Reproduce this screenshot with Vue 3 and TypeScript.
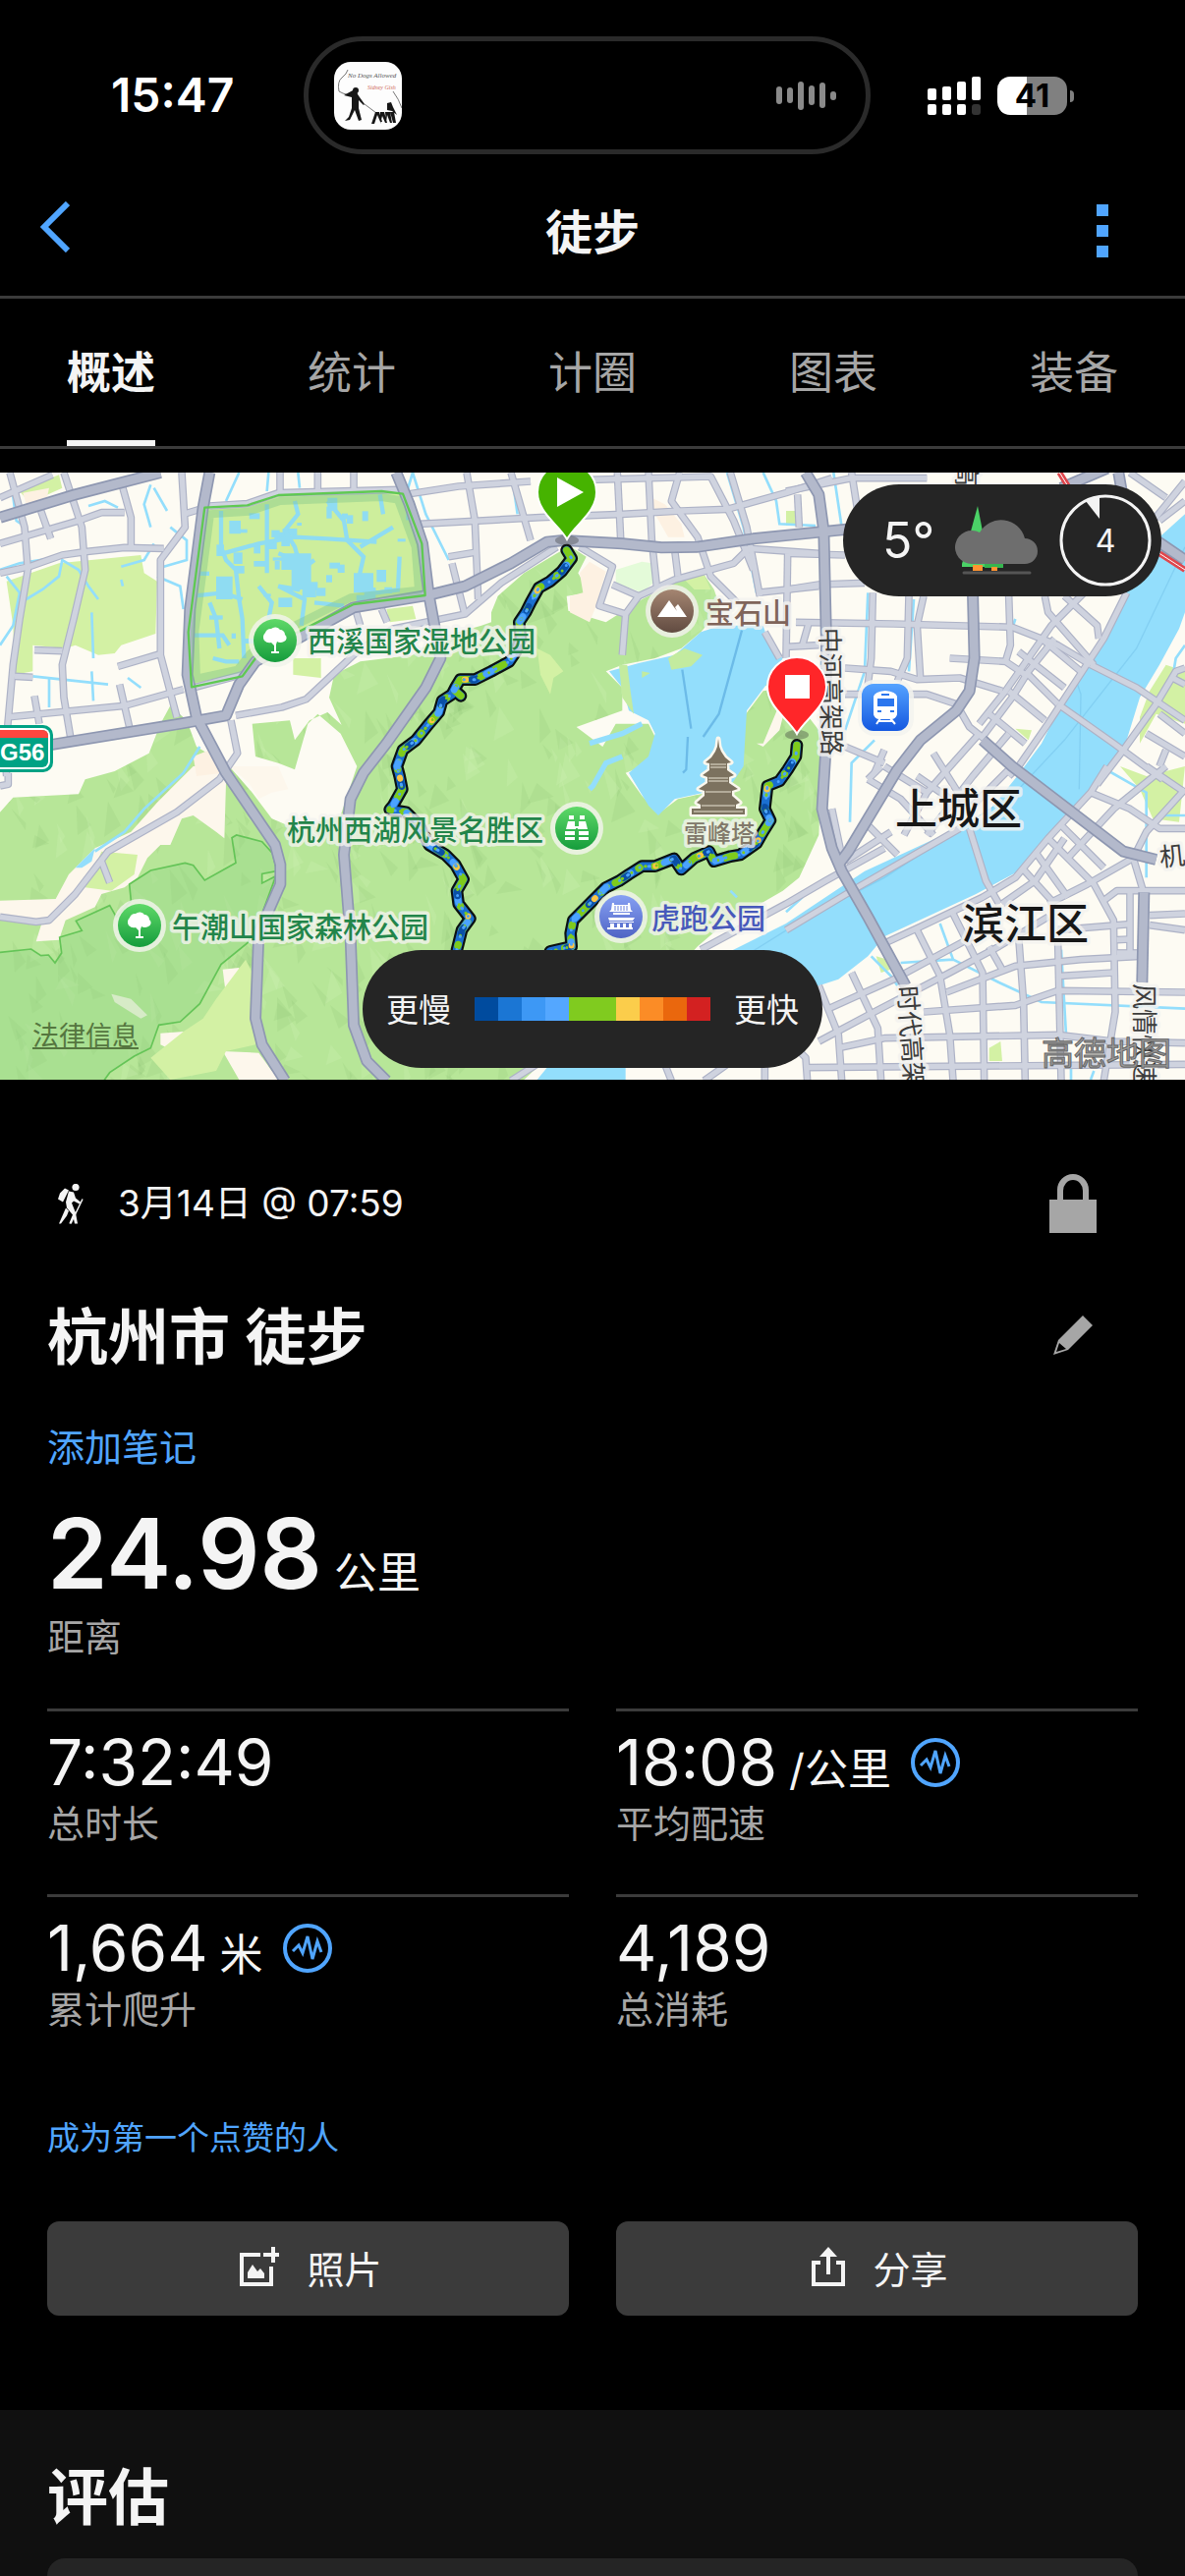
<script setup lang="ts">
import { ref } from 'vue'

const tabs = ['概述', '统计', '计圈', '图表', '装备']
const activeTab = ref('概述')

interface Stat {
  value: string
  unit?: string
  label: string
  chart?: boolean
}
const stats: Stat[] = [
  { value: '7:32:49', label: '总时长' },
  { value: '18:08', unit: '/公里', label: '平均配速', chart: true },
  { value: '1,664', unit: '米', label: '累计爬升', chart: true },
  { value: '4,189', label: '总消耗' },
]

const paceColors = ['#004b9e', '#1b76d4', '#3d98f5', '#54a7ff', '#80cb1f', '#80cb1f', '#fbcd4b', '#fb8c26', '#ea670d', '#d32121']
const wave = [18, 16, 29, 20, 26, 9]

const hills = [
  'M0 1070 40 1025 240 1015 260 970 350 945 455 890 490 800 520 745 570 790 600 870 700 930 770 1010 830 1090 900 1120 1040 1080 1090 930 1040 830 970 770 940 800 900 940 850 920 780 900 770 800 885 790 900 850 945 790 1000 765 1050 810 1055 830 1005 720 1020 650 1100 610 1260 590 1330 540 1470 500 1500 490 1500 460 1520 410 1600 340 1700 280 1740 258 1790 290 1765 340 1800 400 1730 410 1735 455 1850 490 1960 420 2100 350 2150 345 2180 390 2200 450 2140 520 2080 570 2000 600 1900 620 1850 640 1900 690 1900 760 1760 810 1840 870 1800 940 1880 800 1980 800 2010 860 1960 930 1910 950 1960 1020 2010 1075 2070 1030 2160 1010 2230 960 2240 930 2270 780 2330 700 2400 690 2500 820 2505 1000 2500 1140 2440 1270 2390 1310 2200 1420 2130 1480 2000 1620 1660 1830 1600 1887 0 1887Z',
  'M2280 640 2330 560 2380 640 2360 700Z',
]
const hillCreams = [
  'M590 930 660 930 690 980 685 1150 660 1130 590 1080 555 1090 520 1170 490 1170 450 1210 420 1270 380 1300 310 1320 290 1360 200 1400 180 1460 110 1465 130 1400 0 1400 0 1340 170 1335 210 1260 290 1180 400 1130 480 1040Z',
  'M700 930 850 930 880 1000 830 1010 790 1030 760 980Z',
  'M680 1550 730 1545 725 1600 745 1650 690 1630Z',
  'M340 1625 400 1640 450 1690 430 1700 350 1650Z',
  'M490 1745 560 1740 570 1770 530 1800 490 1780Z',
  'M680 1800 790 1805 830 1860 880 1887 730 1887Z',
  'M2330 860 2380 740 2410 700 2380 820 2330 870 2310 860Z',
]
const limes = [
  'M20 365 180 310 430 285 440 340 480 365 475 525 370 560 350 585 300 590 230 560 200 570 100 560 100 640 45 650 40 500Z',
  'M60 90 180 40 190 80 90 125Z',
  'M895 600 980 600 980 660 895 650Z',
  'M1180 450 1260 440 1270 480 1190 490Z',
  'M310 1190 420 1200 410 1260 340 1310 260 1300Z',
  'M620 1700 660 1640 750 1520 780 1580 780 1780 690 1800 660 1860 520 1887 460 1820 560 1740Z',
  'M1640 570 1680 590 1720 640 1690 660 1680 710 1650 650Z',
  'M2090 360 2150 345 2170 390 2120 390Z',
  'M2040 600 2090 570 2140 590 2110 620 2050 635Z',
  'M2400 150 2430 150 2435 195 2400 195Z',
  'M3560 620 3618 640 3618 800 3530 770 3480 860 3480 780 3510 700Z',
  'M3100 815 3150 820 3140 850Z',
  'M3420 930 3500 960 3618 930 3600 1100 3520 1090 3480 1000Z',
  'M2675 1510 2710 1520 2720 1550 2690 1560Z',
  'M3020 1790 3055 1770 3060 1830 3020 1830Z',
]
const peaches = [
  'M1740 410 1780 400 1770 340 1800 305 1850 335 1820 440 1800 490 1740 460Z',
  'M1990 110 2030 130 2080 190 2090 230 2040 230 2000 160Z',
  'M70 95 150 80 140 125 80 130Z',
  'M590 900 640 880 680 950 600 960Z',
]
const waters = [
  'M3618 160 3540 230 3420 420 3380 520 3330 600 3250 720 3180 860 3110 955 3000 1090 2900 1130 2640 1250 2400 1410 2200 1510 2000 1600 1670 1850 1640 1887 1910 1887 1910 1840 2300 1760 2500 1600 2560 1580 2650 1510 2700 1450 2980 1320 3110 1250 3200 1140 3250 1080 3360 980 3440 850 3480 720 3540 620 3600 510 3618 460Z',
  'M2140 520 2200 500 2330 500 2350 560 2390 600 2340 680 2280 760 2270 930 2230 990 2150 1010 2060 1030 2010 1080 1980 1050 1920 950 1980 900 2000 830 1980 790 1920 760 1900 690 1860 640 1950 615 2060 590Z',
  'M230 1240 290 1180 280 1220 250 1240Z',
]
const islets = ['M2040 600 2090 570 2145 590 2110 625 2050 635Z', 'M1890 620 1915 620 1925 700 1935 770 1900 720Z', 'M1960 640 1985 645 1960 660Z']
const streams = [
  'M30 33 50 180 80 200M0 330 60 310 190 290M20 350 60 400 40 500 0 560M80 420 130 390 180 350 190 300 240 330 270 380 300 420',
  'M280 460 285 600M370 360 375 380M270 135 320 120 360 140M460 70 440 130 460 200M470 80 510 150M520 200 570 240 570 300 500 320',
  'M470 250 440 300 370 320M480 350 550 380 560 450M100 655 330 680M150 660 150 750M280 640 285 730M390 660 430 690',
  'M820 33 815 90M910 33 915 80M730 33 690 120M1260 33 1300 160 1370 300M1570 90 1580 160M2220 33 2270 200 2310 400',
  'M2330 33 2370 120 2380 190 2490 195M2650 400 2640 640 2580 820M2790 420 2775 640M2545 33 2570 200M3100 480 3090 510',
  'M2670 850 2600 920 2595 1100M2560 600 2500 640M610 870 560 950 440 1060 380 1130 290 1190M3618 560 3590 600 3580 660',
  'M3360 930 3500 1010 3500 1270M3540 1080 3618 1080M2870 1410 2910 1520 3050 1590 3180 1650 3618 1670M2750 1530 2910 1520',
  'M2660 1510 2720 1570 2740 1600M3240 1490 3255 1750M3270 1850 3270 1887M3340 1860 3330 1887M2400 1375 2450 1330M2230 1310 2250 1330',
]
const marsh = [
  'M675 150 675 260 690 300 720 330 730 420 740 480 745 600M680 280 790 250 900 230 1000 235 1150 245M815 130 815 340',
  'M590 410 680 400 740 420M640 430 660 480 670 570M590 530 680 530 700 560M650 600 690 610 730 610M790 380 830 430 820 480',
  'M900 120 910 160 870 210 900 260 920 330 960 300M850 280 900 300 940 340 910 390 850 380 930 420 920 500',
  'M1000 120 1050 180 1060 240 1110 290 1090 380 1150 400 1220 390M1160 100 1170 160M1100 260 1200 200M1220 290 1215 390M960 430 1050 440',
]
const lakeLines = ['M2083 635 2110 815', 'M2265 515 2195 770 2147 840', 'M2100 840 2095 940 2085 950']

const majors = [
  'M0 170 230 100 490 33', 'M640 33 620 140 580 450 572 650 600 780 690 950 840 1170 856 1230 856 1290 790 1440 780 1700 800 1780 870 1890',
  'M150 865 550 800 690 775 730 680 780 610 900 545 1080 445 1310 407 1420 380 1560 310 1670 245 1720 240 1900 250 2020 262 2130 260 2300 235 2600 205',
  'M1210 33 1250 130 1290 250 1310 410 1345 600 1300 690 1180 860 1110 950 1070 1030 1050 1200 1070 1450 1080 1720 1120 1830 1180 1890',
  'M2460 33 2500 100 2515 210 2523 550 2520 900 2510 1060 2540 1180 2570 1250 2650 1390 2765 1600',
  'M2970 400 2975 600 2960 700 2920 760 2810 850 2740 940 2590 1190 2560 1230',
  'M3000 850 3090 930 3430 1190 3530 1215', 'M3493 1315 3487 1590', 'M3240 80 3380 20', 'M3415 33 3425 90', 'M3530 240 3618 300',
]
const minors = [
  'M0 250 240 180 310 155 380 155', 'M0 340 90 320 190 285 260 275 380 262 500 265', 'M30 33 75 200 85 330 60 480 40 620 15 900 20 960', 'M0 110 160 40',
  'M195 33 250 200 260 330 225 480 190 620 195 720 215 840', 'M375 80 400 170 400 255', 'M125 150 155 235', 'M555 33 565 200 490 300 490 590 540 780',
  'M560 160 610 145', 'M105 575 190 578', 'M360 625 495 585', 'M45 655 100 658', 'M20 780 380 745 560 695', 'M105 715 120 800', 'M365 680 395 810',
  'M640 135 755 128 850 95 1220 85', 'M855 33 855 90', 'M970 33 970 85', 'M1080 33 1080 85', 'M590 690 740 650', 'M0 990 25 985 25 950',
  'M720 775 860 750 935 725 1090 580 1200 510 1420 465 1530 370 1700 260', 'M705 790 725 890 670 970 540 1070 330 1190 230 1320 150 1400 110 1405 0 1390',
  'M310 1220 335 1285', 'M1085 450 1100 500', 'M1165 450 1182 490', 'M1250 98 1400 75 1620 60', 'M1280 190 1650 170 1900 160 2080 150 2220 145 2400 95 2540 50',
  'M1425 33 1450 180 1460 420', 'M1560 33 1620 240', 'M1370 290 1460 275', 'M1380 310 1420 470', 'M1800 55 2170 45 2240 180 2300 330',
  'M1885 33 1895 235', 'M1980 33 1990 240 2005 380', 'M2075 33 2050 120 2130 230 2170 350 2250 430', 'M1770 260 1870 320 1830 440 1910 465 1950 410 1870 375',
  'M1910 465 1900 590', 'M1950 410 2060 360 2240 310 2290 260', 'M2060 270 2070 350', 'M2230 33 2280 200 2320 410', 'M2290 265 2500 280', 'M2310 400 2500 380',
  'M2430 490 2730 495', 'M2335 520 2380 600', 'M2400 90 2600 50 2830 50', 'M2435 100 2440 200', 'M2600 33 2620 160', 'M2410 280 2580 285', 'M2405 390 2500 375 2640 370',
  'M2400 565 2500 560', 'M2405 280 2400 600', 'M2470 490 2450 560', 'M2665 400 2660 600 2650 680', 'M2775 410 2770 600 2740 670', 'M2820 410 2800 500 2810 660',
  'M2730 495 3090 505 3230 560 3330 620', 'M2580 630 2720 640 2800 665 2930 660 3060 700', 'M2900 600 3070 610 3130 650', 'M3080 410 3085 560 3070 610',
  'M3190 410 3200 460 3340 620', 'M3250 410 3350 500 3355 540', 'M3310 400 3210 500 3070 700 2990 800', 'M3440 400 3370 540 3200 800 3110 930 3080 960',
  'M3110 580 3250 690', 'M3180 540 3300 640', 'M2580 710 2830 710 2920 740 2960 810 3010 850', 'M3000 840 3090 720 3140 640 3220 540', 'M3020 770 3130 860',
  'M3080 700 3190 790', 'M3130 640 3230 740', 'M3330 620 3470 690 3618 790', 'M3230 740 3400 860 3550 970', 'M3618 630 3590 640 3530 740 3430 880 3350 985',
  'M3500 830 3618 900', 'M3540 770 3618 830', 'M3580 660 3618 680', 'M3560 880 3540 930', 'M2580 870 2700 920', 'M2700 880 2670 950', 'M3618 60 3480 230', 'M3450 33 3560 110', 'M3618 120 3540 180',
  'M2650 970 2750 1030 2850 1140', 'M2690 930 2650 970', 'M2700 930 2830 1010', 'M2990 830 2830 1010 2760 1140', 'M2850 890 2950 1050', 'M2800 960 2930 1050',
  'M3080 830 2970 960 2830 1140', 'M3090 930 2970 1050', 'M2650 1110 2740 1200', 'M2580 1220 2720 1130', 'M2540 1060 2565 1180 2570 1220',
  'M2140 1490 2400 1350 2520 1280 2700 1180', 'M2400 1430 2600 1310 2930 1120', 'M2960 1120 3010 1280 3050 1350',
  'M2680 1480 2810 1420 3000 1330 3100 1270 3200 1150 3330 1010 3380 930', 'M2530 1670 2730 1580 2970 1450', 'M2500 1770 2650 1690 2900 1560 3050 1480 3200 1390',
  'M3200 1150 3340 1290 3400 1400 3405 1680 3370 1890', 'M3160 1190 3260 1330', 'M3120 1240 3220 1350', 'M3250 1150 3160 1280 3060 1350', 'M3240 1110 3370 1240',
  'M3330 1010 3450 1060 3540 1120 3618 1120', 'M3618 1000 3500 1130 3460 1210 3320 1290 3200 1350', 'M3500 930 3618 1010', 'M3560 930 3400 1060 3260 1210',
  'M3460 1210 3490 1310', 'M3370 1340 3410 1310 3618 1310', 'M3230 1430 3450 1412', 'M3450 1310 3450 1500', 'M3410 1460 3450 1458', 'M3410 1500 3480 1500', 'M3510 1385 3618 1380', 'M3510 1415 3618 1430',
  'M2890 1620 3100 1540 3300 1520 3480 1510', 'M3240 1570 3400 1560', 'M2820 1680 3100 1660 3230 1615 3618 1620', 'M2560 1790 2700 1760 3230 1750 3400 1770 3618 1775',
  'M2460 1850 3618 1840', 'M2500 1600 2560 1750 2570 1890', 'M2600 1560 2680 1730 2690 1890', 'M2800 1430 2870 1570 2900 1750 2910 1890', 'M2910 1380 3000 1560 3005 1890',
  'M3110 1450 3125 1650 3130 1890', 'M3230 1470 3240 1890', 'M3020 1480 3065 1560', 'M2465 1890 2460 1820 2400 1760', 'M1560 1890 1670 1820', 'M2030 1840 2050 1890', 'M2335 1840 2335 1890', 'M2220 1840 2150 1890',
]
const routes = [
  'M1730 270 1745 295 1715 335 1680 365 1645 385 1620 430 1605 460 1585 490 1590 540 1575 580 1555 610 1500 640 1450 665 1405 665 1390 690 1380 710 1350 730 1340 765 1310 800 1270 850 1230 880 1212 930 1220 960 1228 1000 1200 1050 1190 1062 1240 1070 1280 1110 1310 1170 1360 1200 1390 1230 1415 1275 1395 1310 1400 1350 1435 1395 1410 1430 1395 1490',
  'M2433 865 2430 900 2405 940 2380 975 2343 990 2335 1060 2352 1095 2330 1130 2310 1165 2260 1200 2230 1205 2180 1220 2165 1190 2120 1210 2080 1245 2058 1212 2000 1235 1960 1235 1920 1260 1890 1280 1850 1300 1800 1350 1750 1400 1742 1440 1745 1480 1680 1495',
  'M1390 700 1407 715',
]
const routeTones = [
  { color: '#7ecb1c', dash: '46 52 0 60 30 46 4 38', shift: 0, width: 22 },
  { color: '#4ba3ff', dash: '10 74 18 110', shift: 30, width: 20 },
  { color: '#0a4fa6', dash: '14 116 20 150', shift: 70, width: 20 },
  { color: '#fbc545', dash: '0 216 4 170', shift: 44, width: 18 },
  { color: '#7ecb1c', dash: '0 33 2 47', shift: 5, width: 9 },
  { color: '#4ba3ff', dash: '0 41 3 29', shift: 17, width: 9 },
]

// Small deterministic generator for the relief facets and marsh ponds.
let seed = 11
const rand = () => {
  seed = (seed * 16807) % 2147483647
  return seed / 2147483647
}
const facets = Array.from({ length: 620 }, () => {
  const x = rand() * 2500
  const y = 300 + rand() * 1600
  const a = 20 + rand() * 40
  const b = 24 + rand() * 50
  return {
    d: `M${Math.round(x)} ${Math.round(y)}l${Math.round(a)} ${Math.round(b)} ${Math.round(-a * rand() * 1.6)} ${Math.round(b * 0.5)}Z`,
    dark: rand() > 0.35,
  }
})
const ponds = Array.from({ length: 60 }, () => ({
  x: Math.round(590 + rand() * 660),
  y: Math.round(130 + rand() * 480),
  w: Math.round(10 + rand() * 34),
  h: Math.round(8 + rand() * 30),
}))

interface MapLabel { text: string; x: number; y: number; tone: string; turn?: number }
const labels: MapLabel[] = [
  { text: '西溪国家湿地公园', x: 313, y: 183, tone: 'park' },
  { text: '杭州西湖风景名胜区', x: 292, y: 375, tone: 'park' },
  { text: '午潮山国家森林公园', x: 175, y: 474, tone: 'park' },
  { text: '宝石山', x: 718, y: 154, tone: 'peak' },
  { text: '虎跑公园', x: 663, y: 465, tone: 'temple' },
  { text: '雷峰塔', x: 696, y: 376, tone: 'tower' },
  { text: '上城区', x: 911, y: 358, tone: 'district' },
  { text: '滨江区', x: 979, y: 475, tone: 'district' },
  { text: '中河高架路', x: 835, y: 158, tone: 'road', turn: 89 },
  { text: '时代高架', x: 914, y: 523, tone: 'road', turn: 86 },
  { text: '风情快速', x: 1155, y: 520, tone: 'road', turn: 90 },
  { text: '高', x: 974, y: -12, tone: 'road', turn: 90 },
  { text: '机', x: 1181, y: 401, tone: 'road', turn: -6 },
]
</script>

<template>
  <div class="page">
    <header>
      <div class="status">
        <span class="clock">15:47</span>
        <div class="island">
          <svg class="art" viewBox="0 0 69 69" aria-hidden="true">
            <rect width="69" height="69" rx="17" fill="#fdfdfd" />
            <path d="M5 30Q3 20 8 16T14 8M5 30 9 32 16 34M31 43 43 52M60 30Q66 38 69 47" fill="none" stroke="#777" stroke-width="1" />
            <text x="14" y="16" class="art-name">No Dogs Allowed</text>
            <text x="34" y="28" class="art-by">Sidney Gish</text>
            <path d="M19 29h4l1 4 2 3 5 7-1 1-5-5 0 8 3 12-3 1-4-11-5 10-5 1 4-4 3-9 0-11-8-2z" fill="#161616" />
            <circle cx="22" cy="29" r="3" fill="#161616" />
            <path d="M54 42l4-1 2 5 4 8-5-4-5-1zM42 51h4l3 10h-2l-3-7-3 9h-3zM47 51h4l3 11h-2l-3-7-2 8zM52 51h5l2 11h-2l-3-8-1 8zM57 51h4l2 11h-3z" fill="#161616" />
          </svg>
          <span class="wave" aria-hidden="true"><i v-for="(h, i) in wave" :key="i" :style="{ height: h + 'px' }" /></span>
        </div>
        <svg class="signal" viewBox="0 0 54 39" aria-hidden="true">
          <g fill="#fff">
            <rect y="12" width="9" height="12" rx="2" /><rect x="15" y="10" width="9" height="14" rx="2" /><rect x="30" y="5" width="9" height="19" rx="2" /><rect x="45" width="9" height="24" rx="2" />
            <rect y="28" width="9" height="11" rx="2" /><rect x="15" y="28" width="9" height="11" rx="2" /><rect x="30" y="28" width="9" height="11" rx="2" />
          </g>
          <rect x="45" y="28" width="9" height="11" rx="3" fill="#333" />
        </svg>
        <div class="battery">41</div>
      </div>
      <nav class="bar">
        <button class="back" aria-label="返回">
          <svg width="30" height="52" viewBox="0 0 30 52"><path d="M28 2 4 26 28 50" fill="none" stroke="#50a5ff" stroke-width="6" /></svg>
        </button>
        <h1>徒步</h1>
        <button class="more" aria-label="更多"><i /><i /><i /></button>
      </nav>
      <div class="tabs" role="tablist">
        <button v-for="t in tabs" :key="t" role="tab" :aria-selected="t === activeTab" :class="{ on: t === activeTab }" @click="activeTab = t">{{ t }}</button>
      </div>
    </header>

    <section class="map">
      <svg class="canvas" viewBox="0 0 1206 618" preserveAspectRatio="xMidYMid slice">
        <defs>
          <clipPath id="hillClip"><path v-for="d in hills" :key="d" :d="d" /></clipPath>
          <clipPath id="marshClip"><path d="M625 140 755 133 850 102 1165 90 1230 98 1288 250 1298 408 1080 435 900 525 780 600 740 655 585 688 575 520 600 330Z" /></clipPath>
          <linearGradient id="gPark" x2="0" y2="1"><stop stop-color="#5fd968" /><stop offset="1" stop-color="#159c3c" /></linearGradient>
          <linearGradient id="gPeak" x2="0" y2="1"><stop stop-color="#a48571" /><stop offset="1" stop-color="#614b41" /></linearGradient>
          <linearGradient id="gTemple" x2="0" y2="1"><stop stop-color="#86a0f3" /><stop offset="1" stop-color="#4f64c4" /></linearGradient>
          <linearGradient id="gTrain" x2="0" y2="1"><stop stop-color="#55a3ff" /><stop offset="1" stop-color="#1458e0" /></linearGradient>
          <g id="tree"><path d="M-11 0a6 6 0 0 1 1-8 6 6 0 0 1 6-4 6 6 0 0 1 9 1 5 5 0 0 1 5 5 4 4 0 0 1-1 7q-4 2-7 0L1 4v7h3v2h-8v-2h3V5l-3-3q-4 1-7-2Z" fill="#fff" /></g>
        </defs>
        <rect width="1206" height="618" fill="#fdfbf3" />
        <g transform="scale(.33333) translate(0 -33)">
          <path v-for="d in limes.slice(0, 4)" :key="d" :d="d" fill="#d3f1a4" />
          <path v-for="d in hills" :key="d" :d="d" fill="#b7e698" />
          <g clip-path="url(#hillClip)">
            <path v-for="(f, i) in facets" :key="i" :d="f.d" :fill="f.dark ? '#6fa85a' : '#d8f5bd'" :opacity="f.dark ? 0.1 : 0.2" />
          </g>
          <path v-for="d in hillCreams" :key="d" :d="d" fill="#fdf7ec" />
          <path v-for="d in limes.slice(4)" :key="d" :d="d" fill="#d3f1a4" />
          <path v-for="d in peaches" :key="d" :d="d" fill="#fdf1e2" />
          <path d="M1880 330 1960 305 1990 310 1995 370 1960 400 1880 370Z" fill="#e4fbd9" />
          <g fill="#8fd384" fill-opacity=".35" stroke="#64c457" stroke-width="5">
            <path d="M400 1340 395 1290 460 1248 565 1225 590 1232 625 1278 720 1225 708 1148 722 1140 800 1160 832 1195 845 1250 800 1258 800 1287 842 1265 800 1380 755 1470 675 1535 610 1655 550 1710 485 1720 460 1790 410 1815 335 1865 310 1900-20 1900-20 1500 95 1488 125 1508 148 1506 168 1530 188 1500 182 1452 250 1432 232 1402 335 1355 355 1390Z" />
          </g>
          <path v-for="d in waters" :key="d" :d="d" fill="#93defc" />
          <path v-for="d in islets" :key="d" :d="d" fill="#c3eb9f" />
          <path d="M3618 260 3470 570 3250 850 3100 1010 2700 1270 2450 1400 2000 1680M3290 680 3300 710 3295 1000" fill="none" stroke="#7cc9ee" stroke-width="4" opacity=".7" />
          <path v-for="d in lakeLines" :key="d" :d="d" fill="none" stroke="#6cbbe8" stroke-width="7" />
          <path v-for="d in streams" :key="d" :d="d" fill="none" stroke="#93defc" stroke-width="8" />
          <path d="M1260 33 1240 100 1300 400" fill="none" stroke="#93defc" stroke-width="8" />
          <path d="M1900 900 1850 920 1810 990 1800 1000M1800 860 1900 830 1960 800M2540 1200 2560 1180" fill="none" stroke="#93defc" stroke-width="16" />
          <g clip-path="url(#marshClip)">
            <rect x="560" y="80" width="760" height="620" fill="#cdee9c" />
            <rect v-for="(p, i) in ponds" :key="i" :x="p.x" :y="p.y" :width="p.w" :height="p.h" fill="#8fdcf2" />
            <path v-for="d in marsh" :key="d" :d="d" fill="none" stroke="#8fdcf2" stroke-width="13" />
            <path d="M700 180h35v40h-35zM860 280h90v110h-60v-60h-30zM1080 340h60v60h-60zM1000 110h30v40h-30zM660 350h50v70h-50z" fill="#8fdcf2" />
          </g>
          <g fill="none" stroke-linejoin="round">
            <path v-for="d in minors" :key="d" :d="d" stroke="#adb2c6" stroke-width="23" />
            <path v-for="d in minors" :key="d" :d="d" stroke="#cfd3df" stroke-width="16" />
            <path v-for="d in majors" :key="d" :d="d" stroke="#8e97b1" stroke-width="36" />
            <path v-for="d in majors" :key="d" :d="d" stroke="#b3b9cb" stroke-width="26" />
            <path d="M3235 33 3270 90M3540 280 3618 330" stroke="#e0474d" stroke-width="18" />
            <path d="M3235 33 3270 90M3540 280 3618 330" stroke="#fff" stroke-width="3" />
            <path d="M625 140 755 133 850 102 1165 90 1230 98 1288 250 1298 408 1080 435 900 525 780 600 740 655 585 688 575 520 600 330Z" stroke="#5fc952" stroke-width="7" />
            <path d="M642 160 760 152 855 120 1165 108 1215 116 1268 260 1278 392 1070 415 890 505 765 585 725 635 600 662 595 520 620 330Z" stroke="#7cc38a" stroke-width="24" opacity=".4" />
          </g>
          <g fill="none" stroke-linejoin="round" stroke-linecap="round">
            <path v-for="d in routes" :key="d" :d="d" stroke="#0b1010" stroke-width="38" />
            <path v-for="d in routes" :key="d" :d="d" stroke="#1b6fd0" stroke-width="25" />
            <template v-for="t in routeTones" :key="t.dash">
              <path v-for="d in routes" :key="d" :d="d" :stroke="t.color" :stroke-width="t.width" :stroke-dasharray="t.dash" :stroke-dashoffset="t.shift" />
            </template>
          </g>
        </g>

        <g>
          <rect x="-30" y="257" width="84" height="48" rx="10" fill="#00a284" />
          <rect x="-26" y="260" width="77" height="42" rx="8" fill="#fff" />
          <rect x="-26" y="262" width="75" height="38" rx="6" fill="#00a284" />
          <path d="M-26 270v-8h69q6 0 6 6v2z" fill="#ff463f" />
          <text x="0" y="293" class="shield">G56</text>
        </g>

        <text v-for="l in labels" :key="l.text" :class="['lbl', l.tone]" :transform="`translate(${l.x} ${l.y}) rotate(${l.turn ?? 0})`">{{ l.text }}</text>

        <g class="pins">
          <g transform="translate(280 171)"><circle r="27" fill="#f1f3ea" opacity=".85" /><circle r="22" fill="url(#gPark)" /><use href="#tree" /></g>
          <g transform="translate(142 461)"><circle r="27" fill="#f1f3ea" opacity=".85" /><circle r="22" fill="url(#gPark)" /><use href="#tree" /></g>
          <g transform="translate(587 362)">
            <circle r="27" fill="#f1f3ea" opacity=".85" /><circle r="22" fill="url(#gPark)" />
            <path d="M-8-13h5v4h-5zM3-13h5v4H3zM-9-7h7v5h4v-5h7l2 8H1v-1h-2v1h-10zM-12 3h10v4h-10zM2 3h10v4H2zM-12 9h10v3h-10zM2 9h10v3H2z" fill="#fff" />
          </g>
          <g transform="translate(684 141)">
            <circle r="27" fill="#f1f0ea" opacity=".85" /><circle r="22" fill="url(#gPeak)" />
            <path d="M-15 6-3-11 2-4 5 0 3-4 6-7 15 6Z" fill="#fff" />
          </g>
          <g transform="translate(632 452)">
            <circle r="27" fill="#f1f3ea" opacity=".85" /><circle r="22" fill="url(#gTemple)" />
            <path d="M-9-14h2v2H7v-2h2l1 7 2 2H-12l2-2zM-8-4H9v2H-8zM-13 1h27l-2 3h-24zM-12 5h25v1h-25zM-11 7h4v4h3V7h3v4h3V7h3v4h3V7h3v4h1v2h-26v-2h3z" fill="#fff" />
            <path d="M-6-11v5M-3-11v5M0-11v5M3-11v5M6-11v5" stroke="#6b82dc" stroke-width="1" />
          </g>
          <g transform="translate(901 239)">
            <rect x="-28" y="-28" width="57" height="57" rx="17" fill="#f3f3ee" opacity=".85" /><rect x="-24" y="-24" width="48" height="48" rx="12" fill="url(#gTrain)" />
            <path d="M-11-11q1-4 11-5 10 1 11 5v18q-1 4-5 4H-6q-4 0-5-4ZM-5 11-9 17M5 11l5 6M-7 14H7" fill="#fff" stroke="#fff" stroke-width="2" />
            <path d="M-4-14h8v2h-8zM-8-9H9v8H-8zM-8 3h4v2h-4zM5 3h4v2H5z" fill="#2b76ee" />
          </g>
          <g transform="translate(731 271)" stroke-linejoin="round">
            <path d="M0 0 1 8 3 13 7 19 13 24 9 25V32L16 37 11 39V45L20 51 14 53V58L22 65 18 67V71H27V77H-27V71H-18V67L-22 65-14 58V53L-20 51-11 45V39L-16 37-9 32V25L-13 24-7 19-3 13-1 8Z" fill="#7c725f" stroke="#fbf8ee" stroke-width="5" paint-order="stroke" />
            <path d="M-8 26H8M-8 29H8M-10 40H10M-10 43H10M-13 54H13M-17 68H17M-25 74H25" stroke="#e9e4d4" stroke-width="1" />
          </g>
          <g transform="translate(577 19)">
            <ellipse cy="50" rx="12" ry="5" fill="#333" opacity=".35" />
            <path d="M0 49C-8 34-30 22-30 1A30 30 0 0 1 30 1C30 22 8 34 0 49Z" fill="#46b300" stroke="#fff" stroke-width="2" />
            <path d="M-10-14 17 1-10 16Z" fill="#fff" />
          </g>
          <g transform="translate(811 217)">
            <ellipse cy="50" rx="12" ry="5" fill="#333" opacity=".35" />
            <path d="M0 49C-8 34-30 22-30 1A30 30 0 0 1 30 1C30 22 8 34 0 49Z" fill="#ff2629" stroke="#fff" stroke-width="2" />
            <path d="M-12-11H13V13H-12Z" fill="#fff" />
          </g>
        </g>
        <text x="1060" y="603" class="brand">高德地图</text>
      </svg>
      <a class="legal" href="#">法律信息</a>
      <div class="weather">
        <span class="temp">5°</span>
        <svg class="cloud" viewBox="0 0 84 70" aria-hidden="true">
          <path d="M23 0 35 62H7V59Z" fill="#4bd267" /><path d="M30 58H49V63H30Z" fill="#35b54e" />
          <path d="M18 60H28V66H18ZM37 62H43V66H37Z" fill="#ff9430" />
          <path d="M17 59A17 17 0 1 1 25 27A25 25 0 0 1 71 33A13 13 0 0 1 71 59Z" fill="#6e6e6e" />
          <path d="M9 68H76" stroke="#555" stroke-width="3" stroke-linecap="round" />
        </svg>
        <div class="compass">
          <svg viewBox="0 0 94 94" aria-hidden="true"><circle cx="47" cy="47" r="45" fill="none" stroke="#f4f4f4" stroke-width="3" /><path d="M27 7 41 2V25Z" fill="#f4f4f4" /></svg>
          <span>4</span>
        </div>
      </div>
      <div class="legend">
        <span>更慢</span>
        <div class="scale"><i v-for="(c, i) in paceColors" :key="i" :style="{ background: c }" /></div>
        <span>更快</span>
      </div>
    </section>

    <main class="detail">
      <div class="row">
        <svg class="hiker" viewBox="0 0 26 40" aria-hidden="true">
          <g fill="#f4f4f4"><circle cx="18" cy="3" r="3.600" /><path d="M7 4 11 6 5 18 0 15 2 9ZM11 7 16 8 18 14 23 18 22 20 16 17 14 19 16 24 18 29 20 40H17L15 31 9 24 8 18ZM8 24 11 27 9 32 3 40H1Z" /></g>
          <path d="M25 15 13 40M17 28 12 40" stroke="#f4f4f4" stroke-width="1.500" />
        </svg>
        <time>3月14日 @ 07:59</time>
        <button class="tool" aria-label="隐私">
          <svg width="48" height="60" viewBox="0 0 48 60"><path d="M0 26H8V16A16 16 0 0 1 40 16V26H48V60H0ZM14 26H34V17A10 11 0 0 0 14 17Z" fill="#a6a6a6" fill-rule="evenodd" /></svg>
        </button>
      </div>
      <div class="row name">
        <h2>杭州市 徒步</h2>
        <button class="tool" aria-label="编辑">
          <svg width="40" height="42" viewBox="0 0 40 40"><path d="M30 0 40 10 15 35 0 40 5 25ZM6 28 3 37 13 34Z" fill="#a6a6a6" fill-rule="evenodd" /></svg>
        </button>
      </div>
      <a class="note" href="#">添加笔记</a>
      <div class="distance"><strong>24.98</strong><span>公里</span></div>
      <p class="label">距离</p>
      <div class="stats">
        <div v-for="s in stats" :key="s.label" class="stat">
          <div class="value">
            <b>{{ s.value }}</b><span v-if="s.unit">{{ s.unit }}</span>
            <button v-if="s.chart" class="chart" :aria-label="s.label + '图表'">
              <svg width="50" height="50" viewBox="0 0 50 50" fill="none" stroke="#50a5ff"><circle cx="25" cy="25" r="23" stroke-width="4" /><path d="M10 28 16 22 20 30 25 13 30 36 35 18 39 29" stroke-width="3" /></svg>
            </button>
          </div>
          <p class="label">{{ s.label }}</p>
        </div>
      </div>
      <a class="kudos" href="#">成为第一个点赞的人</a>
      <div class="actions">
        <button>
          <svg width="40" height="40" viewBox="0 0 40 40" fill="none" stroke="#f4f4f4"><path d="M21 8H2V38H32V20" stroke-width="4" /><path d="M34 0V16M24 8H40" stroke-width="4" /><path d="M8 32V26L13 18 18 25 21 22 25 27V32Z" fill="#f4f4f4" stroke="none" /></svg>
          照片
        </button>
        <button>
          <svg width="34" height="40" viewBox="0 0 34 40" fill="none" stroke="#f4f4f4" stroke-width="4"><path d="M9 16H2V38H32V16H25M17 28V6" /><path d="M17 0 26 10H8Z" fill="#f4f4f4" stroke="none" /></svg>
          分享
        </button>
      </div>
    </main>

    <section class="review">
      <h2>评估</h2>
      <div class="card" />
    </section>
  </div>
</template>

<style>
body { margin: 0; background: #000; }
</style>

<style scoped>
* { box-sizing: border-box; }
.page { min-height: 100vh; display: flex; flex-direction: column; background: #000; color: #f4f4f4; font-family: Inter, "Noto Sans CJK SC", sans-serif; }
button { border: 0; padding: 0; margin: 0; background: none; color: inherit; font: inherit; }
a { text-decoration: none; color: #50a5ff; }
h1, h2, p { margin: 0; }
svg { display: block; }

.status { display: flex; align-items: center; padding: 37px 113px 12px; }
.clock { flex: 1; font-size: 48px; font-weight: 600; line-height: 60px; color: #fff; }
.island { width: 577px; height: 120px; border: 5px solid #2a2a2a; border-radius: 60px; display: flex; align-items: center; justify-content: space-between; padding: 0 30px 0 26px; }
.art { width: 69px; height: 69px; }
.art-name { font: italic 7px "Liberation Serif", serif; fill: #555; }
.art-by { font: italic 6px "Liberation Serif", serif; fill: #d06a5c; }
.wave { display: flex; align-items: center; gap: 5px; }
.wave i { width: 6px; border-radius: 3px; background: #8a8a8a; }
.signal { width: 54px; height: 39px; margin-left: 58px; }
.battery { position: relative; width: 71px; height: 39px; margin: 0 7px 0 17px; border-radius: 13px; background: linear-gradient(90deg, #fff 30px, #808080 30px); color: #000; font-size: 33px; font-weight: 700; line-height: 39px; text-align: center; }
.battery::after { content: ""; position: absolute; left: 74px; top: 14px; width: 4px; height: 12px; border-radius: 0 4px 4px 0; background: #808080; }

.bar { height: 135px; border-bottom: 3px solid #3b3b3b; display: grid; grid-template-columns: 1fr auto 1fr; align-items: center; padding: 0 41px; }
.bar h1 { font-size: 48px; font-weight: 600; line-height: 60px; padding-top: 3px; }
.back { width: 48px; padding-bottom: 8px; }
.more { width: 86px; justify-self: end; display: flex; flex-direction: column; align-items: center; gap: 9px; }
.more i { width: 12px; height: 12px; background: #50a5ff; }

.tabs { height: 153px; border-bottom: 3px solid #3b3b3b; display: flex; justify-content: space-between; padding: 0 68px; }
.tabs button { font-size: 45px; color: #a6a6a6; border-bottom: 6px solid transparent; }
.tabs .on { font-weight: 600; color: #f4f4f4; border-bottom-color: #f4f4f4; }

.map { position: relative; margin-top: 24px; height: 618px; overflow: hidden; }
.canvas { width: 100%; height: 100%; }
.lbl { font-family: "Noto Sans CJK SC", sans-serif; paint-order: stroke; stroke: rgba(244, 243, 240, 0.8); stroke-width: 7px; stroke-linejoin: round; font-weight: 500; }
.park { font-size: 29px; fill: #22854a; }
.peak { font-size: 29px; fill: #80645a; }
.temple { font-size: 29px; fill: #4759bb; }
.tower { font-size: 24px; fill: #81786a; }
.district { font-size: 43px; fill: #171717; }
.road { font-size: 26px; font-weight: 400; fill: #3c3c3c; }
.shield { font: 700 24px "Liberation Sans", sans-serif; fill: #fff; }
.brand { font: 400 33px "Noto Sans CJK SC", sans-serif; fill: #9c9c9c; stroke: #666; stroke-width: 1px; }
.legal { position: absolute; left: 33px; bottom: 26px; font-size: 27px; line-height: 36px; color: #55763f; text-decoration: underline; }
.weather { position: absolute; top: 12px; right: 24px; height: 114px; border-radius: 57px; background: #252525; display: flex; align-items: center; padding: 0 10px 0 40px; }
.temp { font-size: 50px; width: 74px; }
.cloud { width: 84px; height: 70px; }
.compass { position: relative; width: 94px; height: 94px; margin-left: 22px; display: flex; align-items: center; justify-content: center; font-size: 32px; }
.compass svg { position: absolute; inset: 0; }
.legend { position: absolute; bottom: 12px; left: 50%; transform: translateX(-50%); height: 120px; border-radius: 60px; background: #252525; display: flex; align-items: center; gap: 24px; padding: 0 24px; font-size: 33px; white-space: nowrap; }
.legend span { padding-bottom: 3px; }
.scale { display: flex; }
.scale i { width: 24px; height: 24px; }

.detail { padding: 81px 48px 96px; display: flex; flex-direction: column; }
.row { height: 90px; display: flex; align-items: center; }
.name { margin-top: 44px; }
.hiker { width: 26px; height: 41px; margin: 0 35px 0 11px; }
time { font-size: 37px; line-height: 48px; }
.row h2, .review h2 { font-size: 62px; font-weight: 600; line-height: 72px; }
.row h2 { padding-top: 6px; }
.tool { width: 132px; margin-left: auto; display: flex; justify-content: center; }
.note { margin-top: 45px; font-size: 38px; line-height: 48px; }
.distance { margin-top: 36px; height: 96px; display: flex; align-items: baseline; gap: 12px; line-height: 96px; }
.distance strong { font-size: 99px; font-weight: 600; }
.distance span, .value span { font-size: 44px; }
.label { font-size: 38px; line-height: 42px; color: #a6a6a6; margin-top: 16px; }
.stats { margin-top: 52px; display: grid; grid-template-columns: 1fr 1fr; gap: 51px 48px; }
.stat { border-top: 3px solid #3b3b3b; padding-top: 10px; }
.stat .label { margin-top: 0; }
.value { height: 83px; display: flex; align-items: baseline; line-height: 84px; gap: 12px; }
.value b { font-size: 64px; font-weight: 400; }
.chart { align-self: center; margin-left: 8px; }
.kudos { margin-top: 86px; font-size: 33px; line-height: 48px; }
.actions { margin-top: 61px; display: grid; grid-template-columns: 1fr 1fr; gap: 48px; }
.actions button { height: 96px; border-radius: 12px; background: #3b3b3b; display: flex; align-items: center; justify-content: center; gap: 28px; padding: 0 0 4px 6px; font-size: 38px; }

.review { flex: 1; background: #101010; padding: 54px 48px 0; display: flex; flex-direction: column; }
.card { flex: 1; margin-top: 25px; border-radius: 24px 24px 0 0; background: #252525; }
</style>
